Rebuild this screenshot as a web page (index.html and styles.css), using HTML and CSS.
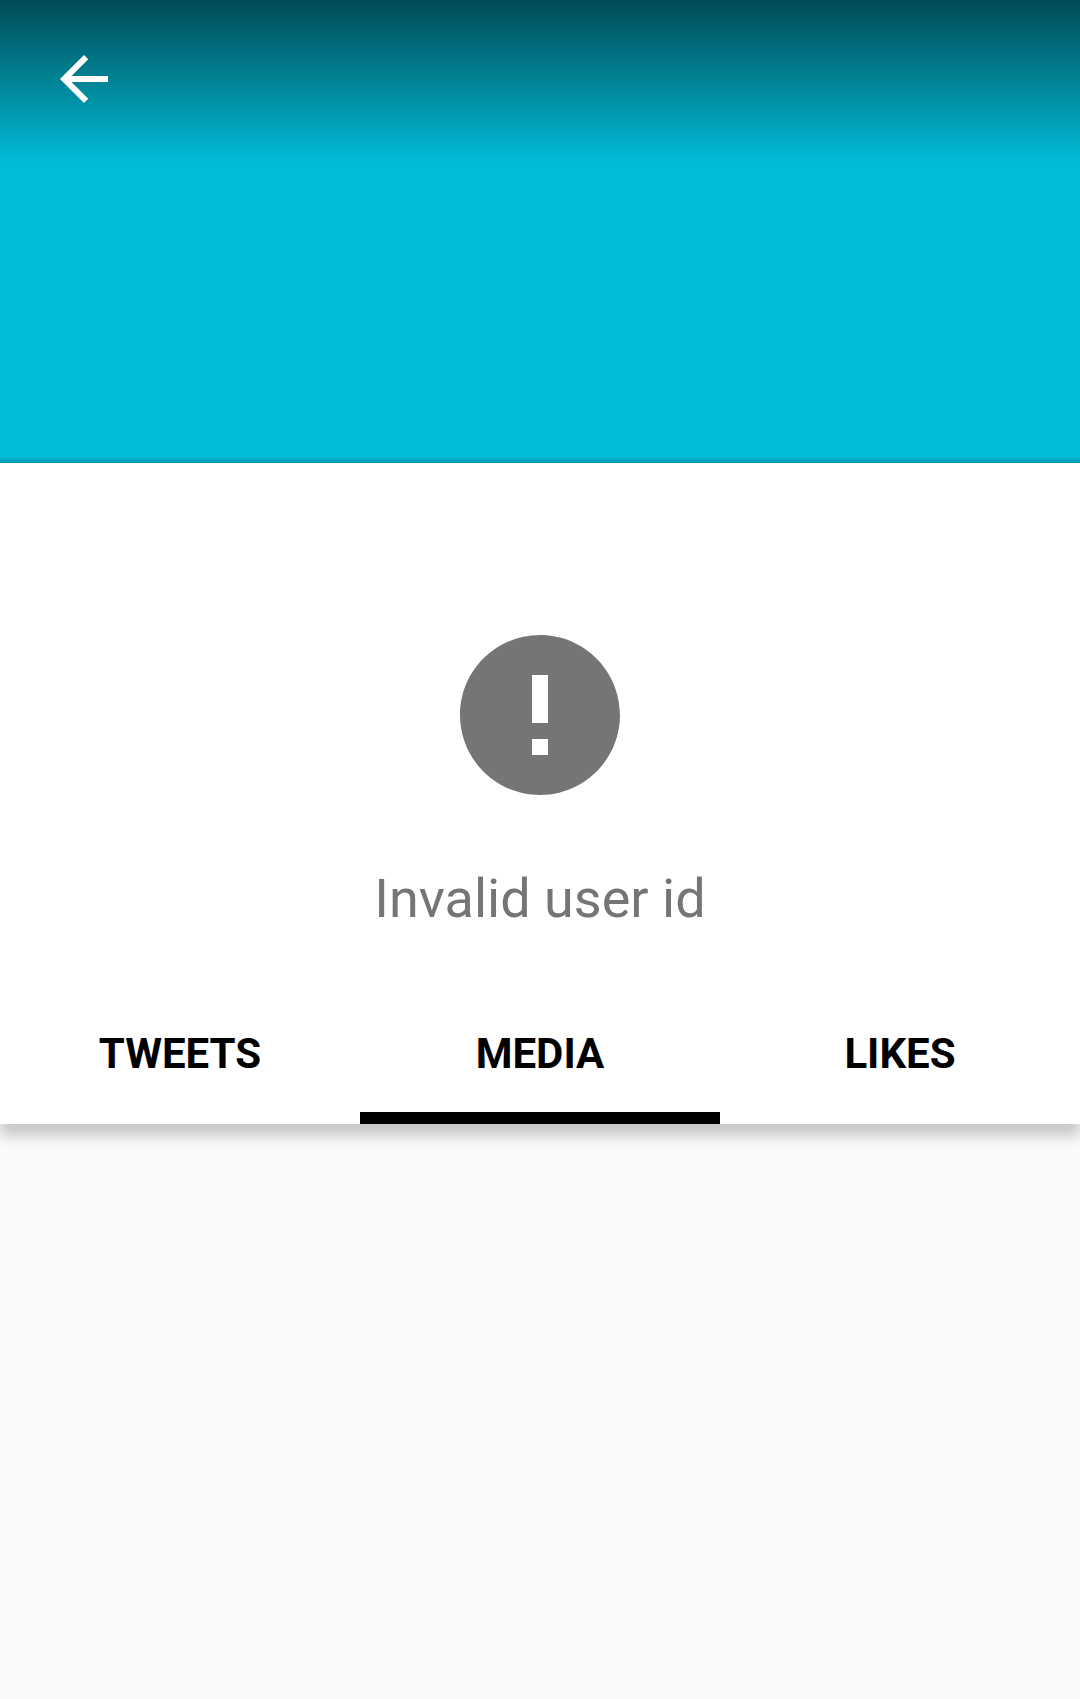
FILE: index.html
```html
<!DOCTYPE html>
<html lang="en">
<head>
<meta charset="utf-8">
<meta name="viewport" content="width=device-width, initial-scale=1">
<title>Profile</title>
<link rel="stylesheet" href="styles.css">
</head>
<body>
<header class="profile">
  <div class="banner">
    <button class="back" type="button" aria-label="Back">
      <svg class="back-icon" viewBox="0 0 24 24" aria-hidden="true"><path fill="currentColor" d="M20 11H7.830l5.590-5.590L12 4l-8 8 8 8 1.410-1.410L7.830 13H20v-2z"/></svg>
    </button>
  </div>
  <section class="error">
    <svg class="error-icon" viewBox="0 0 24 24" aria-hidden="true"><path fill="currentColor" d="M12 2C6.480 2 2 6.480 2 12s4.480 10 10 10 10-4.480 10-10S17.520 2 12 2zm1 15h-2v-2h2v2zm0-4h-2V7h2v6z"/></svg>
    <p class="error-text">Invalid user id</p>
  </section>
  <nav class="tabs">
    <button class="tab" type="button">TWEETS</button>
    <button class="tab tab-active" type="button" aria-current="page">MEDIA</button>
    <button class="tab" type="button">LIKES</button>
  </nav>
</header>
<main class="content"></main>
</body>
</html>
```
FILE: styles.css
```css
* {
  box-sizing: border-box;
}

body {
  margin: 0;
  min-height: 100vh;
  background: #fafafa;
  font-family: Roboto, sans-serif;
}

.profile {
  background: #fff;
  box-shadow: 0 12px 12px rgba(0, 0, 0, 0.2);
}

.banner {
  height: 463px;
  padding: 43px 48px;
  background:
    linear-gradient(to top, rgba(0, 0, 0, 0.2), rgba(0, 0, 0, 0)) bottom / 100% 6px no-repeat,
    linear-gradient(rgba(0, 0, 0, 0.6), rgba(0, 0, 0, 0)) top / 100% 164px no-repeat,
    #00bcd7;
}

.back {
  display: block;
  padding: 0;
  border: 0;
  background: none;
  color: #fff;
}

.back-icon {
  display: block;
  width: 72px;
  height: 72px;
}

.error {
  display: flex;
  flex-direction: column;
  align-items: center;
  padding: 156px 48px 45px;
  color: #757575;
}

.error-icon {
  width: 192px;
  height: 192px;
}

.error-text {
  margin: 52px 0 0;
  font-size: 54px;
  line-height: 72px;
}

.tabs {
  display: grid;
  grid-template-columns: repeat(3, 1fr);
}

.tab {
  height: 144px;
  padding: 4px 0 0;
  border: 0;
  border-top: 12px solid transparent;
  border-bottom: 12px solid transparent;
  background: none;
  color: #000;
  font: bold 42px/48px Roboto, sans-serif;
}

.tab-active {
  border-bottom-color: #000;
}
```
